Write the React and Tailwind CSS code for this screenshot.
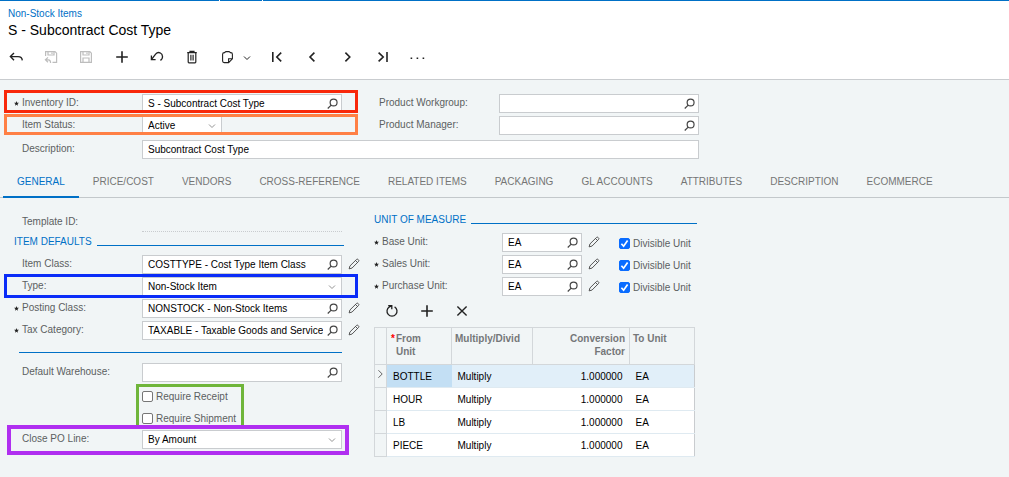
import React from "react";

function Icon({ size = 16, className = "", sw = 1.2, children }) {
  return (
    <svg
      width={size}
      height={size}
      viewBox="0 0 16 16"
      fill="none"
      stroke="currentColor"
      strokeWidth={sw}
      className={"block shrink-0 " + className}
      aria-hidden="true"
    >
      {children}
    </svg>
  );
}

const SearchIcon = () => (
  <Icon size={12} sw={1.6}>
    <circle cx="8.8" cy="6" r="4.6" />
    <path d="M5.6 9.4 L1 14" />
  </Icon>
);

const PencilIcon = () => (
  <Icon size={12} sw={1.2}>
    <path d="M1.5 14.5 L2.6 10.6 L11.4 1.9 Q12.4 1 13.5 2 L14.1 2.6 Q15 3.6 14.1 4.6 L5.4 13.4 Z M10 3.3 L12.7 6" />
  </Icon>
);

const ChevronDown = ({ className = "" }) => (
  <Icon size={8} sw={2} className={className}>
    <path d="M2 5 L8 11 L14 5" />
  </Icon>
);

function ToolButton({ label, disabled, className = "", children }) {
  return (
    <button
      type="button"
      aria-label={label}
      disabled={disabled}
      className={
        "flex h-4 w-4 items-center justify-center " +
        (disabled ? "text-[#bdbdbd] " : "text-[#222] ") +
        className
      }
    >
      {children}
    </button>
  );
}

function Star({ on }) {
  return (
    <span className="w-2 shrink-0 text-[#222]">
      {on && (
        <svg width="5" height="5" viewBox="0 0 10 10" fill="currentColor" className="mt-[7px] block" aria-hidden="true">
          <path d="M5 0 L6.3 3.4 L10 3.6 L7.1 6 L8.1 9.6 L5 7.6 L1.9 9.6 L2.9 6 L0 3.6 L3.7 3.4 Z" />
        </svg>
      )}
    </span>
  );
}

function Row({ id, label, required, labelClass = "w-[120px]", className = "", children }) {
  return (
    <div className={"relative flex h-[22px] items-start " + className}>
      <Star on={required} />
      <label htmlFor={id} className={"shrink-0 leading-[18px] text-[#5c5f61] " + labelClass}>
        {label}
      </label>
      {children}
    </div>
  );
}

function Lookup({ id, value = "", width = "w-[200px]", label }) {
  return (
    <div className={"flex h-[19px] shrink-0 items-center border border-[#c9cccf] bg-white pr-[2px] pl-[5px] " + width}>
      <input id={id} defaultValue={value} className="h-full min-w-0 flex-1 bg-transparent text-black outline-none" />
      <button type="button" aria-label={"Search " + label} className="ml-1 text-[#444]">
        <SearchIcon />
      </button>
    </div>
  );
}

function Select({ id, value, width = "w-[200px]" }) {
  return (
    <div className={"relative h-[19px] shrink-0 " + width}>
      <select
        id={id}
        defaultValue={value}
        className="block h-full w-full appearance-none border border-[#c9cccf] bg-white pl-[5px] text-black outline-none"
      >
        <option>{value}</option>
      </select>
      <ChevronDown className="pointer-events-none absolute top-[6px] right-[6px] text-[#949494]" />
    </div>
  );
}

function Edit({ label }) {
  return (
    <button type="button" aria-label={"Edit " + label} className="mt-[3px] ml-[6px] shrink-0 text-[#444]">
      <PencilIcon />
    </button>
  );
}

function SectionTitle({ children, width }) {
  return (
    <div className={"flex items-end gap-[5px] " + width}>
      <h2 className="shrink-0 leading-4 text-[#0070c6]">{children}</h2>
      <span className="mb-1 flex-1 border-t border-[#0070c6]" />
    </div>
  );
}

function Check({ id, label, checked }) {
  return (
    <div className="flex h-[22px] items-center gap-[3px]">
      <span className="relative block h-[11px] w-[11px]">
        <input
          id={id}
          type="checkbox"
          defaultChecked={checked}
          className="peer block h-[11px] w-[11px] appearance-none rounded-[2px] border border-[#767676] bg-white checked:border-[#0a6cff] checked:bg-[#0a6cff]"
        />
        <svg
          viewBox="0 0 11 11"
          className="pointer-events-none absolute inset-0 hidden h-[11px] w-[11px] peer-checked:block"
          fill="none"
          stroke="white"
          strokeWidth="1.7"
          aria-hidden="true"
        >
          <path d="M2.4 5.8 L4.6 8.2 L8.6 2.6" />
        </svg>
      </span>
      <label htmlFor={id} className="text-[#5c5f61]">{label}</label>
    </div>
  );
}

const tabs = [
  "GENERAL", "PRICE/COST", "VENDORS", "CROSS-REFERENCE", "RELATED ITEMS",
  "PACKAGING", "GL ACCOUNTS", "ATTRIBUTES", "DESCRIPTION", "ECOMMERCE",
];

const units = ["Base Unit", "Sales Unit", "Purchase Unit"];
const conversions = ["BOTTLE", "HOUR", "LB", "PIECE"];

function Header() {
  return (
    <header className="border-b border-[#c9cccf] bg-white">
      <div className="flex h-px gap-px">
        <span className="w-[219px] bg-[#0070c6]" />
        <span className="w-[42px] bg-[#0070c6]" />
        <span className="flex-1 bg-[#0070c6]" />
      </div>
      <div className="px-2 pt-[5px] pb-[14px]">
        <a href="#items" className="block leading-4 text-[#0070c6]">Non-Stock Items</a>
        <h1 className="text-[14px] leading-[17px] text-black">S - Subcontract Cost Type</h1>
        <div className="mt-[10px] flex items-center gap-[19px]" role="toolbar">
          <ToolButton label="Back">
            <Icon sw={1.4}><path d="M6 4 L2.4 7.6 L6 11.2 M2.4 7.6 H10 Q14 7.6 14.3 11.4" /></Icon>
          </ToolButton>
          <ToolButton label="Save and close" disabled>
            <Icon sw={1.2}><path d="M2.6 7 V2.6 H12 L13.6 4.2 V13.4 H9.5 M5 2.6 V6 H11 V2.6 M9 3.5 V5 M5 8.4 L2.4 10.8 L5 13.2 M2.4 10.8 H5.5 Q7.6 10.8 7.6 14" /></Icon>
          </ToolButton>
          <ToolButton label="Save" disabled>
            <Icon sw={1.2}><path d="M2.6 2.6 H11.8 L13.4 4.2 V13.4 H2.6 Z M5 2.6 V6 H11 V2.6 M9 3.5 V5 M5 13.4 V9 H11 V13.4" /></Icon>
          </ToolButton>
          <ToolButton label="Add">
            <Icon sw={1.6}><path d="M9 2.2 V13.8 M3.2 8 H14.8" /></Icon>
          </ToolButton>
          <ToolButton label="Undo">
            <Icon sw={1.3}><path d="M3.4 6.6 V10.6 H7.6 M3.6 10.4 L7.6 5.2 Q9.6 2.8 12 3.8 Q15.4 5.6 14.2 9.2 Q13.6 10.6 12.4 11.4" /></Icon>
          </ToolButton>
          <ToolButton label="Delete">
            <Icon sw={1.2}><path d="M4.2 3.6 H13.8 M7 3.6 V2.4 H11 V3.6 M5.2 3.6 V13 Q5.2 13.8 6 13.8 H12 Q12.8 13.8 12.8 13 V3.6 M7.9 5.8 V11.5 M10.1 5.8 V11.5" /></Icon>
          </ToolButton>
          <div className="flex items-center">
            <ToolButton label="Clipboard">
              <Icon sw={1.1}><path d="M7 3.6 H6.4 Q4.6 3.6 4.6 5.2 V12 Q4.6 13.6 6.2 13.6 H10.6 L14.4 9.8 V5.2 Q14.4 3.6 12.8 3.6 H12 M7 3.8 Q7 2.6 8 2.6 H11 Q12 2.6 12 3.8 M10.6 13.6 V9.8 H14.4" /></Icon>
            </ToolButton>
            <button type="button" aria-label="Clipboard options" className="mt-px ml-[9px] text-[#222]">
              <ChevronDown />
            </button>
          </div>
          <ToolButton label="First">
            <Icon sw={1.6}><path d="M2.8 3 V13 M11.2 3.6 L6.8 8 L11.2 12.4" /></Icon>
          </ToolButton>
          <ToolButton label="Previous">
            <Icon sw={1.6}><path d="M9.4 3.6 L5 8 L9.4 12.4" /></Icon>
          </ToolButton>
          <ToolButton label="Next">
            <Icon sw={1.6}><path d="M5.4 3.6 L9.8 8 L5.4 12.4" /></Icon>
          </ToolButton>
          <ToolButton label="Last">
            <Icon sw={1.6}><path d="M12 3 V13 M3.6 3.6 L8.2 8 L3.6 12.4" /></Icon>
          </ToolButton>
          <ToolButton label="More">
            <Icon><path d="M0.6 8.4 h1.6 v1.6 h-1.6z M6.6 8.4 h1.6 v1.6 h-1.6z M12.6 8.4 h1.6 v1.6 h-1.6z" fill="currentColor" stroke="none" /></Icon>
          </ToolButton>
        </div>
      </div>
    </header>
  );
}

function Summary() {
  return (
    <section className="pt-[14px] pl-[14px]">
      <div className="flex">
        <div className="w-[365px] shrink-0">
          <Row id="inventory" label="Inventory ID:" required>
            <Lookup id="inventory" label="inventory" value="S - Subcontract Cost Type" />
            <span className="pointer-events-none absolute -top-[4px] -left-[10px] h-[23px] w-[354px] border-3 border-[#f8280a]" />
          </Row>
          <Row id="status" label="Item Status:">
            <Select id="status" value="Active" width="w-[80px]" />
            <span className="pointer-events-none absolute -top-[2px] -left-[10px] h-[21px] w-[354px] border-3 border-[#ff8045]" />
          </Row>
        </div>
        <div>
          <div className="flex h-[22px]">
            <label htmlFor="workgroup" className="w-[120px] leading-[18px] text-[#5c5f61]">Product Workgroup:</label>
            <Lookup id="workgroup" label="workgroup" />
          </div>
          <div className="flex h-[22px]">
            <label htmlFor="manager" className="w-[120px] leading-[18px] text-[#5c5f61]">Product Manager:</label>
            <Lookup id="manager" label="manager" />
          </div>
        </div>
      </div>
      <Row id="description" label="Description:" className="mt-[2px]">
        <input
          id="description"
          defaultValue="Subcontract Cost Type"
          className="h-[19px] w-[557px] border border-[#c9cccf] bg-white px-[5px] text-black outline-none"
        />
      </Row>
    </section>
  );
}

function Tabs() {
  return (
    <nav className="mt-1 flex h-[32px] border-b border-[#c3c8cb] pl-[3px]" role="tablist">
      {tabs.map((t, i) => (
        <button
          key={t}
          type="button"
          role="tab"
          aria-selected={i === 0}
          className={
            "-mb-px h-[32px] border-b-2 px-[14px] pt-px whitespace-nowrap " +
            (i === 0 ? "border-[#0070c6] text-[#0070c6]" : "border-transparent text-[#757575]")
          }
        >
          {t}
        </button>
      ))}
    </nav>
  );
}

function Defaults() {
  return (
    <section className="w-[360px] shrink-0 pl-[14px]">
      <Row id="template" label="Template ID:" className="pt-px">
        <input id="template" readOnly className="h-[19px] w-[200px] border-b border-dotted border-[#c9cccf] bg-transparent outline-none" />
      </Row>
      <SectionTitle width="w-[330px]">ITEM DEFAULTS</SectionTitle>
      <div className="mt-[5px]">
        <Row id="class" label="Item Class:">
          <Lookup id="class" label="class" value="COSTTYPE - Cost Type Item Class" />
          <Edit label="class" />
        </Row>
        <Row id="type" label="Type:">
          <Select id="type" value="Non-Stock Item" />
          <span className="pointer-events-none absolute -top-[3px] -left-[10px] h-[24px] w-[354px] border-3 border-[#0a2cf8]" />
        </Row>
        <Row id="posting" label="Posting Class:" required>
          <Lookup id="posting" label="posting class" value="NONSTOCK - Non-Stock Items" />
          <Edit label="posting class" />
        </Row>
        <Row id="tax" label="Tax Category:" required>
          <Lookup id="tax" label="tax category" value="TAXABLE - Taxable Goods and Services" />
          <Edit label="tax category" />
        </Row>
      </div>
      <hr className="mt-[9px] mb-[10px] ml-[5px] w-[323px] border-[#0070c6]" />
      <Row id="warehouse" label="Default Warehouse:">
        <Lookup id="warehouse" label="warehouse" />
      </Row>
      <div className="relative ml-[128px]">
        <Check id="receipt" label="Require Receipt" />
        <Check id="shipment" label="Require Shipment" />
        <span className="pointer-events-none absolute -top-px -left-[6px] h-[44px] w-[108px] border-3 border-[#6fb53a]" />
      </div>
      <Row id="close" label="Close PO Line:" className="mt-px">
        <Select id="close" value="By Amount" />
        <span className="pointer-events-none absolute -top-[5px] -left-[7px] h-[30px] w-[342px] border-4 border-[#b02ff0]" />
      </Row>
    </section>
  );
}

function Conversions() {
  const head = "border border-[#d3d7da] pt-[4px] align-top font-bold leading-[13px] text-[#757779]";
  return (
    <table className="w-[320px] table-fixed border-collapse border border-[#c9cccf] text-black">
      <colgroup>
        <col className="w-[12px]" />
        <col className="w-[65px]" />
        <col className="w-[81px]" />
        <col className="w-[97px]" />
        <col className="w-[65px]" />
      </colgroup>
      <thead>
        <tr className="h-[37px]">
          <th className={head} />
          <th className={head + " text-left"}>
            <span className="flex pl-1">
              <span className="w-[5px] text-[#f00]">*</span>
              <span className="w-8">From Unit</span>
            </span>
          </th>
          <th className={head + " pl-[3px] text-left"}>Multiply/Divid</th>
          <th className={head + " pr-1 pl-6 text-right"}>Conversion Factor</th>
          <th className={head + " pl-[3px] text-left"}>To Unit</th>
        </tr>
      </thead>
      <tbody>
        {conversions.map((u, i) => (
          <tr key={u} className={"h-[23px] border-b border-[#dfeaf1] " + (i === 0 ? "bg-[#e1eff9]" : "bg-white")}>
            <td className="border border-[#d3d7da] bg-[#f1f5f6] text-[#666]">
              {i === 0 && <Icon size={10} sw={1.6} className="-mt-1"><path d="M5.5 2 L11.5 8 L5.5 14" /></Icon>}
            </td>
            <td className={"pl-[6px] " + (i === 0 ? "bg-[#c3dff4]" : "")}>{u}</td>
            <td className="pl-[6px]">Multiply</td>
            <td className="pr-[7px] text-right">1.000000</td>
            <td className="pl-[6px]">EA</td>
          </tr>
        ))}
      </tbody>
    </table>
  );
}

function Measures() {
  return (
    <section className="w-[325px] shrink-0">
      <SectionTitle width="w-[323px]">UNIT OF MEASURE</SectionTitle>
      <div className="mt-[5px]">
        {units.map((u) => (
          <Row key={u} id={u} label={u + ":"} required>
            <Lookup id={u} label={u} value="EA" width="w-[80px]" />
            <Edit label={u} />
            <div className="-mt-px ml-[19px]">
              <Check id={u + " divisible"} label="Divisible Unit" checked />
            </div>
          </Row>
        ))}
      </div>
      <div className="mt-1 mb-2 flex gap-[19px] pl-[10px]">
        <ToolButton label="Refresh">
          <Icon sw={1.3}><path d="M10.6 3.9 A5 5 0 1 1 5.4 3.9 L7.6 3 M4.2 2.6 H7.8 V6.2" /></Icon>
        </ToolButton>
        <ToolButton label="Add unit">
          <Icon sw={1.6}><path d="M8 2.2 V13.8 M2.2 8 H13.8" /></Icon>
        </ToolButton>
        <ToolButton label="Remove unit">
          <Icon sw={1.4}><path d="M3.4 3.4 L12.6 12.6 M12.6 3.4 L3.4 12.6" /></Icon>
        </ToolButton>
      </div>
      <Conversions />
    </section>
  );
}

export default function App() {
  return (
    <div className="min-h-screen bg-[#f1f5f6] font-['Liberation_Sans',Arial,sans-serif] text-[10px]">
      <Header />
      <main>
        <Summary />
        <Tabs />
        <div className="flex gap-[14px] pt-[14px] pb-4">
          <Defaults />
          <Measures />
        </div>
      </main>
    </div>
  );
}
